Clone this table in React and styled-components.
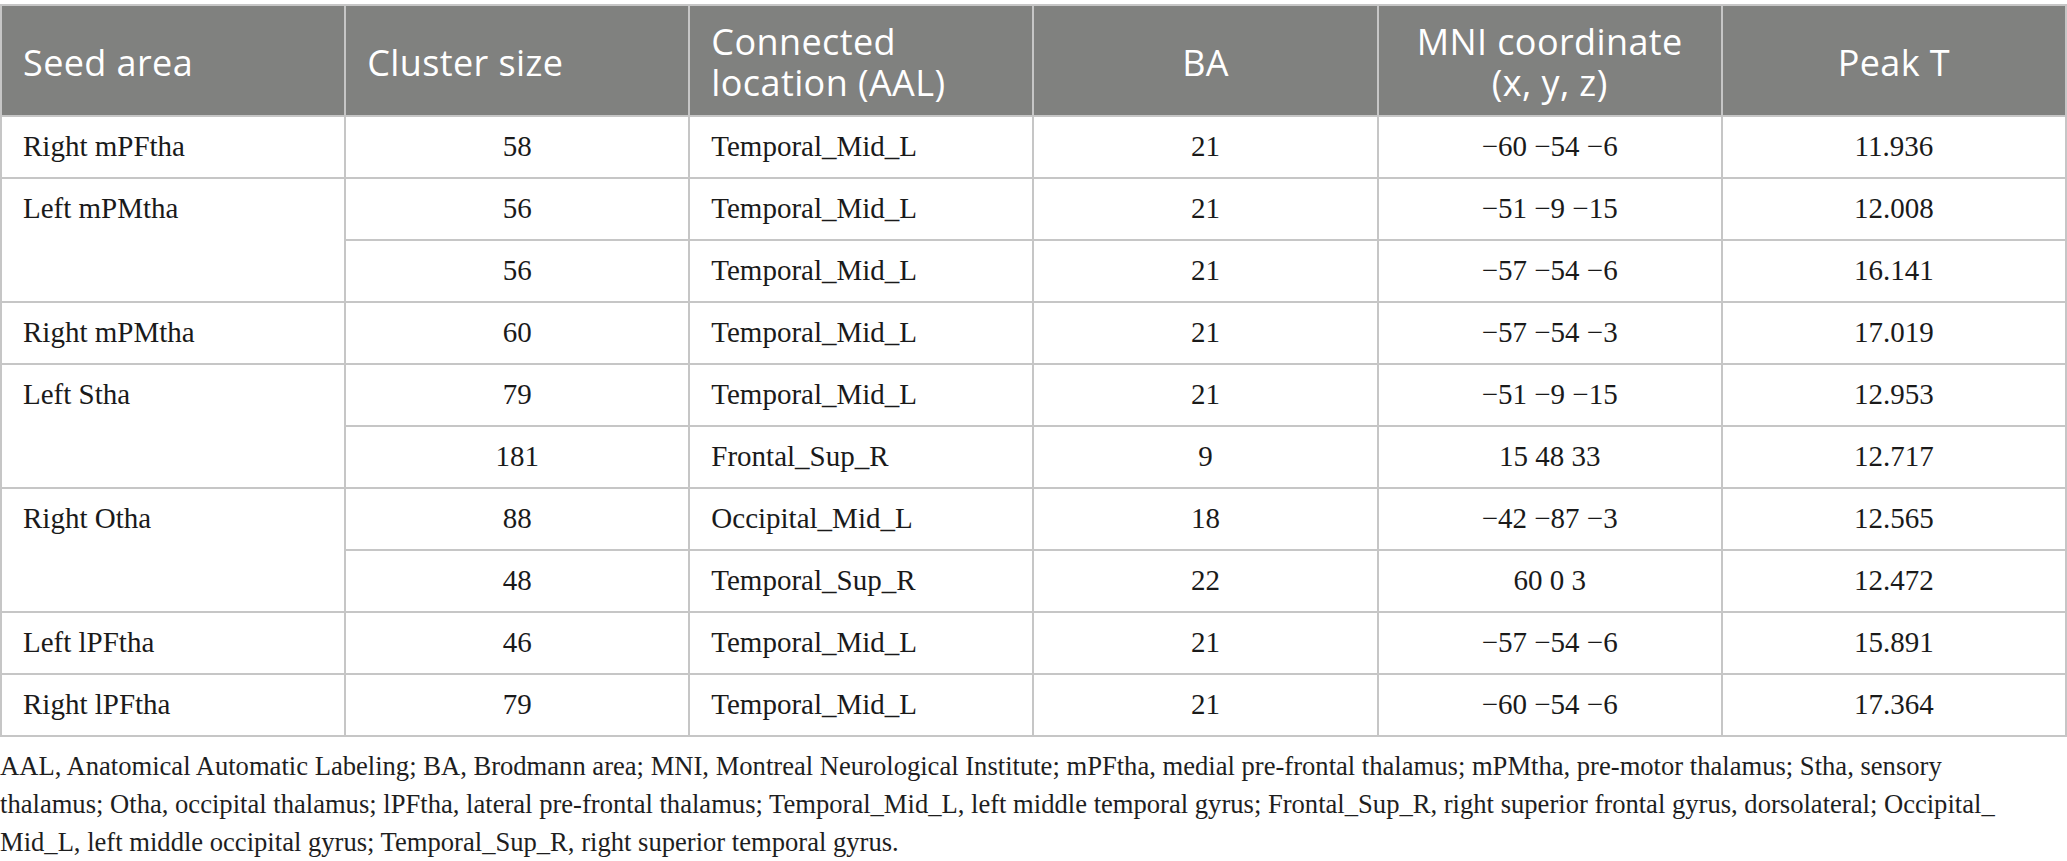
import styled, { createGlobalStyle } from "styled-components"

const Global = createGlobalStyle`
  html, body {
    margin: 0;
    padding: 0;
    background: #ffffff;
  }
`

const Page = styled.div`
  padding-top: 4px;
  width: 2067px;
`

const Table = styled.table`
  width: 100%;
  table-layout: fixed;
  border-collapse: collapse;
  border: 2px solid #c6c6c6;
`

const HeadCell = styled.th`
  height: 106px;
  padding: 3px 21px 0;
  background: #80817f;
  color: #ffffff;
  font-family: "Open Sans", "Noto Sans", sans-serif;
  font-weight: 400;
  font-size: 36px;
  line-height: 41px;
  letter-spacing: 0.4px;
  text-align: ${props => props.align || "center"};
  vertical-align: middle;
  border-left: 2px solid #c6c6c6;
  border-right: 2px solid #c6c6c6;
`

const Cell = styled.td`
  height: 48px;
  padding: 12px 21px 0;
  color: #1a1a1a;
  font-family: "Liberation Serif", "Times New Roman", serif;
  font-size: 29px;
  line-height: 35px;
  text-align: ${props => props.align || "center"};
  vertical-align: top;
  border: 2px solid #c6c6c6;
`

const Note = styled.p`
  margin: 10px 0 0;
  color: #1e1e1e;
  font-family: "Liberation Serif", "Times New Roman", serif;
  font-size: 26.6px;
  line-height: 38px;
  white-space: nowrap;
`

const headers = [
  { label: "Seed area", align: "left" },
  { label: "Cluster size", align: "left" },
  { label: <>Connected<br />location (AAL)</>, align: "left" },
  { label: "BA" },
  { label: <>MNI coordinate<br />(x, y, z)</> },
  { label: "Peak T" },
]

const rows = [
  { seed: "Right mPFtha", span: 1, size: "58", loc: "Temporal_Mid_L", ba: "21", mni: "\u221260 \u221254 \u22126", t: "11.936" },
  { seed: "Left mPMtha", span: 2, size: "56", loc: "Temporal_Mid_L", ba: "21", mni: "\u221251 \u22129 \u221215", t: "12.008" },
  { size: "56", loc: "Temporal_Mid_L", ba: "21", mni: "\u221257 \u221254 \u22126", t: "16.141" },
  { seed: "Right mPMtha", span: 1, size: "60", loc: "Temporal_Mid_L", ba: "21", mni: "\u221257 \u221254 \u22123", t: "17.019" },
  { seed: "Left Stha", span: 2, size: "79", loc: "Temporal_Mid_L", ba: "21", mni: "\u221251 \u22129 \u221215", t: "12.953" },
  { size: "181", loc: "Frontal_Sup_R", ba: "9", mni: "15 48 33", t: "12.717" },
  { seed: "Right Otha", span: 2, size: "88", loc: "Occipital_Mid_L", ba: "18", mni: "\u221242 \u221287 \u22123", t: "12.565" },
  { size: "48", loc: "Temporal_Sup_R", ba: "22", mni: "60 0 3", t: "12.472" },
  { seed: "Left lPFtha", span: 1, size: "46", loc: "Temporal_Mid_L", ba: "21", mni: "\u221257 \u221254 \u22126", t: "15.891" },
  { seed: "Right lPFtha", span: 1, size: "79", loc: "Temporal_Mid_L", ba: "21", mni: "\u221260 \u221254 \u22126", t: "17.364" },
]

function App() {
  return (
    <Page>
      <Global />
      <Table>
        <thead>
          <tr>
            {headers.map((h, i) => (
              <HeadCell key={i} align={h.align}>{h.label}</HeadCell>
            ))}
          </tr>
        </thead>
        <tbody>
          {rows.map((r, i) => (
            <tr key={i}>
              {r.seed && <Cell align="left" rowSpan={r.span}>{r.seed}</Cell>}
              <Cell>{r.size}</Cell>
              <Cell align="left">{r.loc}</Cell>
              <Cell>{r.ba}</Cell>
              <Cell>{r.mni}</Cell>
              <Cell>{r.t}</Cell>
            </tr>
          ))}
        </tbody>
      </Table>
      <Note>
        AAL, Anatomical Automatic Labeling; BA, Brodmann area; MNI, Montreal Neurological Institute; mPFtha, medial pre-frontal thalamus; mPMtha, pre-motor thalamus; Stha, sensory
        <br />
        thalamus; Otha, occipital thalamus; lPFtha, lateral pre-frontal thalamus; Temporal_Mid_L, left middle temporal gyrus; Frontal_Sup_R, right superior frontal gyrus, dorsolateral; Occipital_
        <br />
        Mid_L, left middle occipital gyrus; Temporal_Sup_R, right superior temporal gyrus.
      </Note>
    </Page>
  )
}

export default App
